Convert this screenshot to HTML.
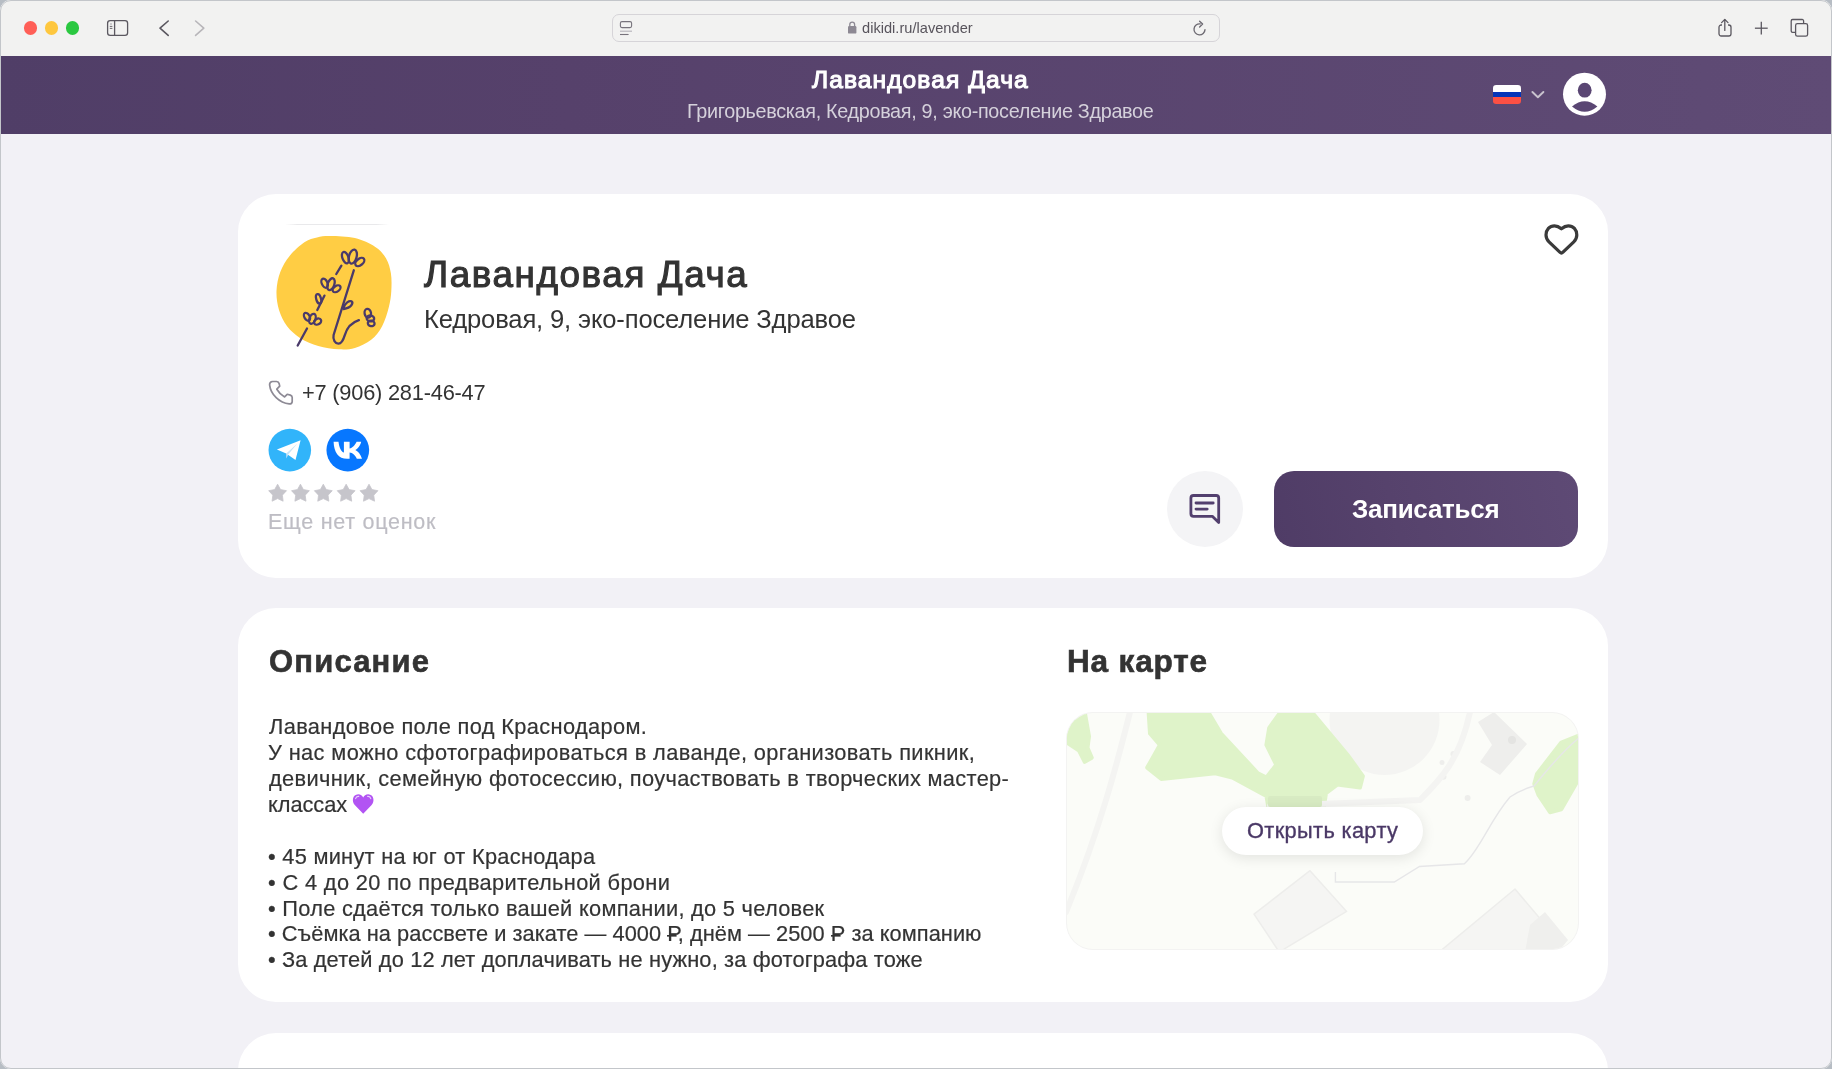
<!DOCTYPE html>
<html><head><meta charset="utf-8">
<style>
*{box-sizing:border-box;margin:0;padding:0}
html,body{width:1832px;height:1069px;overflow:hidden;background:#b7bdc4}
body{position:relative;font-family:"Liberation Sans",sans-serif}
.abs{position:absolute}
svg{position:absolute;overflow:visible}
#win{position:absolute;left:0;top:0;width:1832px;height:1069px;border-radius:11px;overflow:hidden;background:#f2f1f6}
#frame{position:absolute;left:0;top:0;width:1832px;height:1069px;border-radius:11px;border:1px solid #c3c6ca;pointer-events:none}
#chrome{position:absolute;left:0;top:0;width:1832px;height:56px;background:#f2f2f1}
#sep{display:none}
#hdr{position:absolute;left:0;top:56px;width:1832px;height:78px;background:linear-gradient(90deg,#503e67 0%,#56416b 31%,#5e4a74 93%,#5f4b75 100%)}
.t{position:absolute;white-space:nowrap;line-height:40px;will-change:transform}
.card{position:absolute;left:238px;width:1370px;background:#fff;border-radius:38px}
.rub{background:linear-gradient(#333,#333) no-repeat;background-size:0.48em 0.075em;background-position:-0.04em 0.665em}
</style></head><body>
<div id="win">
  <div id="chrome"></div>
  <!-- traffic lights -->
  <div class="abs" style="left:23.8px;top:21.2px;width:13.5px;height:13.5px;border-radius:50%;background:#ff5f57"></div>
  <div class="abs" style="left:44.8px;top:21.2px;width:13.5px;height:13.5px;border-radius:50%;background:#fec73e"></div>
  <div class="abs" style="left:65.6px;top:21.2px;width:13.5px;height:13.5px;border-radius:50%;background:#2ac840"></div>
  <!-- sidebar icon -->
  <svg style="left:0;top:0" width="1" height="1">
    <rect x="107.6" y="20.6" width="20" height="14.8" rx="2.6" fill="none" stroke="#5b5860" stroke-width="1.3"/>
    <line x1="114.6" y1="20.6" x2="114.6" y2="35.4" stroke="#5b5860" stroke-width="1.3"/>
    <line x1="110.2" y1="24" x2="111.8" y2="24" stroke="#8a878e" stroke-width="0.9"/>
    <line x1="109.8" y1="26.4" x2="112.4" y2="26.4" stroke="#5b5860" stroke-width="0.9"/>
    <line x1="109.8" y1="28.4" x2="112.4" y2="28.4" stroke="#5b5860" stroke-width="0.9"/>
    <!-- back / forward -->
    <polyline points="168.2,21 160,28.2 168.2,35.4" fill="none" stroke="#5b5860" stroke-width="1.6" stroke-linecap="round" stroke-linejoin="round"/>
    <polyline points="195.6,21 203.8,28.2 195.6,35.4" fill="none" stroke="#b8b6ba" stroke-width="1.6" stroke-linecap="round" stroke-linejoin="round"/>
  </svg>
  <!-- url bar -->
  <div class="abs" style="left:612px;top:14px;width:607.5px;height:27.5px;border:1px solid #d6d4d8;border-radius:7px"></div>
  <svg style="left:0;top:0" width="1" height="1">
    <rect x="620.4" y="21.6" width="11.2" height="6" rx="1.6" fill="none" stroke="#77737c" stroke-width="1.1"/>
    <line x1="620" y1="31.2" x2="632" y2="31.2" stroke="#b5b2b8" stroke-width="1.1"/>
    <line x1="620" y1="34.5" x2="628.6" y2="34.5" stroke="#77737c" stroke-width="1.1"/>
    <!-- lock -->
    <path d="M849.8,26.2 v-1.6 a2.4,2.4 0 0 1 4.8,0 v1.6" fill="none" stroke="#8d8993" stroke-width="1.3"/>
    <rect x="848" y="26" width="8.4" height="7.6" rx="1.2" fill="#8d8993"/>
    <!-- reload -->
    <path d="M1205,29.6 A5.5,5.5 0 1 1 1200.2,23.9" fill="none" stroke="#6d6a72" stroke-width="1.35" stroke-linecap="round"/>
    <polyline points="1199.6,21.2 1202.6,24.1 1199.6,27" fill="none" stroke="#6d6a72" stroke-width="1.35" stroke-linecap="round" stroke-linejoin="round"/>
    <!-- share -->
    <path d="M1722,25 h-0.8 a2.2,2.2 0 0 0 -2.2,2.2 v6.6 a2.2,2.2 0 0 0 2.2,2.2 h7.6 a2.2,2.2 0 0 0 2.2,-2.2 v-6.6 a2.2,2.2 0 0 0 -2.2,-2.2 h-0.8" fill="none" stroke="#5b5860" stroke-width="1.3"/>
    <line x1="1724.8" y1="19.8" x2="1724.8" y2="30.4" stroke="#5b5860" stroke-width="1.3" stroke-linecap="round"/>
    <polyline points="1721.6,22.6 1724.8,19.4 1728,22.6" fill="none" stroke="#5b5860" stroke-width="1.3" stroke-linejoin="round" stroke-linecap="round"/>
    <!-- plus -->
    <line x1="1761.3" y1="21.8" x2="1761.3" y2="34.6" stroke="#5b5860" stroke-width="1.3"/>
    <line x1="1754.9" y1="28.2" x2="1767.7" y2="28.2" stroke="#5b5860" stroke-width="1.3"/>
    <!-- tabs -->
    <path d="M1795,32.3 h-2.4 a1.4,1.4 0 0 1 -1.4,-1.4 v-10 a1.4,1.4 0 0 1 1.4,-1.4 h9.6 a1.4,1.4 0 0 1 1.4,1.4 v2.4" fill="none" stroke="#5b5860" stroke-width="1.3"/>
    <rect x="1795.6" y="23.6" width="12" height="12.6" rx="1.8" fill="none" stroke="#5b5860" stroke-width="1.3"/>
  </svg>
  <div id="sep"></div>
  <div id="hdr"></div>
  <!-- flag -->
  <div class="abs" style="left:1493.2px;top:84.8px;width:27.9px;height:19px;border-radius:3.2px;overflow:hidden;background:linear-gradient(180deg,#ffffff 0 34.5%,#0535b8 34.5% 63.5%,#fc5044 63.5% 100%)"></div>
  <svg style="left:0;top:0" width="1" height="1">
    <polyline points="1532.4,92 1537.9,97.3 1543.4,92" fill="none" stroke="#c9c3ce" stroke-width="1.9" stroke-linecap="round" stroke-linejoin="round"/>
    <circle cx="1584.5" cy="94.2" r="21.5" fill="#ffffff"/>
    <ellipse cx="1584.7" cy="90.2" rx="6.9" ry="7.4" fill="#5a4673"/>
    <path d="M1572,106.5 Q1584.7,96 1597.4,106.5 Q1584.7,117 1572,106.5 Z" fill="#5a4673"/>
  </svg>

  <div class="card" style="top:193.5px;height:384.4px"></div>
  <div class="card" style="top:608.3px;height:394px"></div>
  <div class="card" style="top:1032.7px;height:200px"></div>

  <!-- logo -->
  <div class="abs" style="left:285px;top:224.4px;width:104px;height:1px;background:linear-gradient(90deg,rgba(225,225,228,0),#e9e9eb 12%,#e9e9eb 88%,rgba(225,225,228,0))"></div>
  <svg style="left:0;top:0" width="1" height="1">
    <path d="M330.5,236.0 C336.8,236.1 347.4,236.3 354.9,238.1 C362.4,239.9 370.1,243.5 375.3,246.9 C380.5,250.3 383.5,254.0 386.1,258.4 C388.7,262.8 390.0,267.9 390.9,273.3 C391.8,278.7 391.6,285.4 391.3,291.0 C391.0,296.6 390.3,301.3 388.8,307.2 C387.3,313.1 385.0,320.8 382.1,326.2 C379.2,331.6 375.7,336.2 371.2,339.8 C366.7,343.4 360.3,346.3 354.9,347.9 C349.5,349.5 344.8,349.6 338.7,349.3 C332.6,349.0 324.6,347.7 318.3,345.9 C312.0,344.1 305.9,341.7 300.7,338.4 C295.5,335.1 290.7,330.9 287.1,326.2 C283.5,321.5 280.8,315.9 279.0,310.0 C277.2,304.1 276.3,297.3 276.5,291.0 C276.7,284.7 278.1,277.9 280.3,272.0 C282.5,266.1 285.7,260.7 289.8,255.7 C293.9,250.7 300.3,245.1 304.8,242.1 C309.3,239.1 312.7,238.4 317.0,237.4 C321.3,236.4 324.2,235.9 330.5,236.0 Z" fill="#ffcd44"/>
<g fill="none" stroke="#4a3a6a" stroke-width="2.3" stroke-linecap="round" stroke-linejoin="round">
<path d="M353.8,270.3 L333.6,335 C332.6,339.8 335.2,343.8 338.6,343.6 C341.8,343.4 343.4,339.6 344.6,335.6 C346.6,328.6 350.6,322.8 358.9,320.2"/>
<path d="M343.6,307.6 C345.2,302.6 349,300.6 351.6,301.4 C353.4,302.8 351.8,307.6 343.6,309"/>
<line x1="341.4" y1="265.7" x2="336.3" y2="274"/>
<line x1="324.5" y1="295.6" x2="317.3" y2="310"/>
<line x1="307" y1="328.5" x2="297.7" y2="345.5"/>
<ellipse cx="345.4" cy="257.6" rx="3.0" ry="6.0" transform="rotate(-20 345.4 257.6)"/><ellipse cx="352.8" cy="256.6" rx="3.8" ry="7.2" transform="rotate(15 352.8 256.6)"/><ellipse cx="359.8" cy="262" rx="3.2" ry="5.2" transform="rotate(52 359.8 262)"/>
<ellipse cx="324.6" cy="283.2" rx="2.8" ry="4.8" transform="rotate(-25 324.6 283.2)"/><ellipse cx="331" cy="284.2" rx="3.3" ry="6.2" transform="rotate(20 331 284.2)"/><ellipse cx="336.6" cy="288.8" rx="2.8" ry="4.4" transform="rotate(55 336.6 288.8)"/>
<ellipse cx="318.6" cy="298.8" rx="2.4" ry="4.8" transform="rotate(-15 318.6 298.8)"/>
<ellipse cx="307" cy="316.8" rx="2.6" ry="4.3" transform="rotate(-30 307 316.8)"/><ellipse cx="312.4" cy="318.8" rx="3.0" ry="5.2" transform="rotate(20 312.4 318.8)"/><ellipse cx="317.6" cy="321.6" rx="2.8" ry="3.8" transform="rotate(60 317.6 321.6)"/>
<ellipse cx="367.8" cy="313.2" rx="3.2" ry="4.4" transform="rotate(-10 367.8 313.2)"/><ellipse cx="370.4" cy="318.4" rx="3.8" ry="2.9" transform="rotate(10 370.4 318.4)"/><ellipse cx="371.2" cy="323.4" rx="3.4" ry="2.7" transform="rotate(10 371.2 323.4)"/>
</g>
  </svg>
  <!-- heart -->
  <svg style="left:0;top:0" width="1" height="1">
    <path d="M1561.4,228.8 C1558.8,226.6 1556.6,225.8 1554.5,225.8 C1549.5,225.8 1546,229.8 1546,235 C1546,238 1547.4,240.2 1549,241.8 L1559.8,252.2 C1560.8,253.2 1562,253.2 1563,252.2 L1573.8,241.8 C1575.4,240.2 1576.8,238 1576.8,235 C1576.8,229.8 1573.3,225.8 1568.3,225.8 C1566.2,225.8 1564,226.6 1561.4,228.8 Z" fill="none" stroke="#3a3a3a" stroke-width="3.2" stroke-linejoin="round"/>
  </svg>
  <!-- phone icon -->
  <svg style="left:0;top:0" width="1" height="1">
    <path d="M272.6,381.5 L276.6,381.5 C278.4,381.6 278.9,382.6 279.2,383.8 L279.7,386.2 L276.8,389.2 C278.8,392.6 281.4,395.2 284.6,396.9 L287.2,394.3 L290.4,395.1 C291.6,395.5 292.2,396.2 292.2,397.6 L292.2,401.6 C292.1,403.2 291,404 289.2,403.9 C279.6,403 270.6,394.4 269.6,384.8 C269.5,382.6 270.6,381.6 272.6,381.5 Z" fill="none" stroke="#8d8a95" stroke-width="1.7" stroke-linejoin="round"/>
  </svg>
  <!-- telegram / vk -->
  <svg style="left:0;top:0" width="1" height="1">
    <circle cx="289.8" cy="450.1" r="21.3" fill="#31b4fa"/>
    <path d="M300.6,440.2 L276.9,449.5 L286.2,453.4 L295.5,460 Z" fill="#ffffff"/>
    <path d="M286.2,453.4 L297.4,443.4 L288.2,454.6 L286.4,458.6 Z" fill="#c8e4f6"/>
    <circle cx="347.8" cy="450.1" r="21.35" fill="#0777ff"/>
    <path d="M333.6,441.7 H338.5 C339.2,448 341.5,451.8 343.9,452.6 V441.7 H349.6 V448.4 C352.2,448.1 355.2,444.9 356.6,441.7 H361.2 C360.6,445.2 357.8,448.6 355.3,450 C357.8,451.2 360.7,454.2 362,458.8 H356.8 C355.6,455.6 352.6,452.8 349.6,452.6 V458.8 H347.2 C338.4,458.8 333.9,452.2 333.6,441.7 Z" fill="#ffffff"/>
  </svg>
  <!-- stars -->
  <svg style="left:0;top:0" width="1" height="1">
    <g fill="#c6c5cb" stroke="#c6c5cb" stroke-width="0.8" stroke-linejoin="round"><path d="M277.60,484.20 L280.54,489.55 L286.54,490.70 L282.36,495.15 L283.13,501.20 L277.60,498.60 L272.07,501.20 L272.84,495.15 L268.66,490.70 L274.66,489.55 Z"/><path d="M300.45,484.20 L303.39,489.55 L309.39,490.70 L305.21,495.15 L305.98,501.20 L300.45,498.60 L294.92,501.20 L295.69,495.15 L291.51,490.70 L297.51,489.55 Z"/><path d="M323.30,484.20 L326.24,489.55 L332.24,490.70 L328.06,495.15 L328.83,501.20 L323.30,498.60 L317.77,501.20 L318.54,495.15 L314.36,490.70 L320.36,489.55 Z"/><path d="M346.15,484.20 L349.09,489.55 L355.09,490.70 L350.91,495.15 L351.68,501.20 L346.15,498.60 L340.62,501.20 L341.39,495.15 L337.21,490.70 L343.21,489.55 Z"/><path d="M369.00,484.20 L371.94,489.55 L377.94,490.70 L373.76,495.15 L374.53,501.20 L369.00,498.60 L363.47,501.20 L364.24,495.15 L360.06,490.70 L366.06,489.55 Z"/></g>
  </svg>
  <!-- comment button -->
  <div class="abs" style="left:1167px;top:471px;width:76px;height:76px;border-radius:50%;background:#f4f4f6"></div>
  <svg style="left:0;top:0" width="1" height="1">
    <path d="M1193.5,495.5 H1216.2 C1217.8,495.5 1218.7,496.4 1218.7,498 V522.6 L1212.3,516.3 H1193.5 C1191.9,516.3 1190.9,515.4 1190.9,513.8 V498 C1190.9,496.4 1191.9,495.5 1193.5,495.5 Z" fill="none" stroke="#523f6e" stroke-width="2.8" stroke-linejoin="round"/>
    <line x1="1196" y1="503" x2="1213.2" y2="503" stroke="#523f6e" stroke-width="2.8" stroke-linecap="round"/>
    <line x1="1196" y1="509.1" x2="1207.2" y2="509.1" stroke="#523f6e" stroke-width="2.8" stroke-linecap="round"/>
  </svg>
  <!-- book button -->
  <div class="abs" style="left:1274px;top:471.3px;width:304px;height:76px;border-radius:20px;background:linear-gradient(75deg,#4f3c66 0%,#56426c 40%,#5e4a75 100%)"></div>

  <!-- map -->
  <div class="abs" style="left:1067px;top:713px;width:511px;height:236px;border-radius:26px;overflow:hidden;background:#fbfcf8;box-shadow:0 0 0 1px #f3f3f2">
    <svg style="left:-1067px;top:-713px" width="1" height="1">
<circle cx="1384.5" cy="720" r="55" fill="#f4f4f2"/>
<g fill="#dff3c9" stroke="#dff3c9" stroke-width="4" stroke-linejoin="round">
<path d="M1066,737 L1076.2,712 L1084.7,712 L1089,736.4 L1087.5,747.7 L1091.8,757.7 L1084.7,761.9 L1079,750.6 L1066,742 Z"/>
<path d="M1148.6,712 L1208.2,712 L1221,733.5 L1257.9,773.3 L1266.4,777.5 L1276.3,764.8 L1266.4,744.9 L1269.2,727.9 L1280.6,712 L1311.8,712 L1348.7,756.3 L1362.9,776.1 L1360,787.5 L1337.3,784.6 L1326,793.2 L1323.1,812 L1269.2,812 L1266.4,796 L1232.3,777.5 L1215.3,773.3 L1161.3,779 L1147.2,767.6 L1159.9,744.9 L1150,733.5 Z"/>
<path d="M1537,773.9 L1561.3,742.6 L1580,735 L1580,776.7 L1561.3,809.3 L1550,812.2 L1538.6,795.2 L1534.3,783.8 Z"/>
</g>
<g fill="#f5f5f3" stroke="#ededeb" stroke-width="1.5" stroke-linejoin="round">
<path d="M1310,870.7 L1346.6,911.4 L1279.2,952 L1254,914.2 Z"/>
<path d="M1515,889 L1559.8,942 L1550,952 L1439.2,952 Z"/>
</g>
<g fill="#eeeeec">
<path d="M1478,722 L1494,712 L1527,744 L1500,775 L1480,762 L1492,745 Z"/><circle cx="1512" cy="740" r="4" fill="#e4e4e2"/>
<circle cx="1453.4" cy="754" r="3"/><circle cx="1442" cy="762.5" r="2.5"/><circle cx="1443.5" cy="776.7" r="3"/><circle cx="1467.6" cy="798" r="3"/>
<path d="M1530,925 L1545,912 L1568,940 L1558,952 L1525,952 Z" fill="#efefed"/>
</g>
<g fill="none" stroke="#f2f2f0" stroke-width="6" stroke-linecap="round" stroke-linejoin="round">
<path d="M1130,712 C1118,760 1100,830 1066,912" stroke="#f4f4f2"/>
<path d="M1270,806 L1420,800 C1440,780 1460,760 1470,712" stroke="#f4f4f2"/>
</g>
<path d="M1335.4,872 L1335.4,882 L1394.3,882 L1419.5,866.5 L1464.4,863.7 C1480,850 1490,820 1510,797 C1520,790 1528,788 1534,786 C1555,760 1570,745 1580,737" fill="none" stroke="#e6e6e8" stroke-width="1.4"/>
<rect x="1268" y="796" width="54" height="11" rx="2" fill="#d8ebc3"/>
    </svg>
  </div>
  <div class="abs" style="left:1222px;top:807px;width:201px;height:48px;border-radius:24px;background:#fff;box-shadow:0 3px 14px rgba(0,0,0,0.10)"></div>
  <!-- heart emoji -->
  <svg style="left:0;top:0" width="1" height="1">
    <path d="M363.2,813.8 L355,805.2 C351.4,801.6 352.4,794.4 358.2,794.2 C360.6,794.2 362.4,795.8 363.2,797.4 C364,795.8 365.8,794.2 368.2,794.2 C374,794.4 375,801.6 371.4,805.2 Z" fill="#b254f3"/>
    <path d="M355.6,798.6 C356,797 357.4,796.2 358.8,796.4" fill="none" stroke="#e9d2fb" stroke-width="1.1" stroke-linecap="round"/>
    <path d="M367.6,796.4 C369,796.2 370.4,797 370.8,798.6" fill="none" stroke="#e9d2fb" stroke-width="1.1" stroke-linecap="round"/>
  </svg>
<div class="t" style="left:861.90px;top:7.94px;font-size:14.6px;font-weight:400;color:#57535b;letter-spacing:0.018px;">dikidi.ru/lavender</div>
<div class="t" style="left:812.10px;top:60.08px;font-size:24.6px;font-weight:400;color:#ffffff;letter-spacing:1.064px;-webkit-text-stroke:1.1px #ffffff;">Лавандовая Дача</div>
<div class="t" style="left:686.70px;top:90.79px;font-size:19.8px;font-weight:400;color:#d5d1db;letter-spacing:-0.310px;">Григорьевская, Кедровая, 9, эко-поселение Здравое</div>
<div class="t" style="left:423.80px;top:254.75px;font-size:36.8px;font-weight:400;color:#333333;letter-spacing:1.593px;-webkit-text-stroke:1.1px #333333;">Лавандовая Дача</div>
<div class="t" style="left:423.90px;top:298.73px;font-size:25.6px;font-weight:400;color:#333333;letter-spacing:-0.158px;">Кедровая, 9, эко-поселение Здравое</div>
<div class="t" style="left:301.90px;top:373.05px;font-size:21.8px;font-weight:400;color:#333333;letter-spacing:-0.212px;">+7 (906) 281-46-47</div>
<div class="t" style="left:268.20px;top:502.35px;font-size:21.5px;font-weight:400;color:#bebdc4;letter-spacing:0.731px;-webkit-text-stroke:0.2px #bebdc4;">Еще нет оценок</div>
<div class="t" style="left:1351.70px;top:489.29px;font-size:26.0px;font-weight:700;color:#ffffff;letter-spacing:-0.267px;">Записаться</div>
<div class="t" style="left:268.90px;top:642.26px;font-size:31.0px;font-weight:700;color:#333333;letter-spacing:1.171px;-webkit-text-stroke:0.6px #333333;">Описание</div>
<div class="t" style="left:1066.70px;top:641.15px;font-size:31.6px;font-weight:700;color:#333333;letter-spacing:0.800px;-webkit-text-stroke:0.6px #333333;">На карте</div>
<div class="t" style="left:1246.70px;top:811.35px;font-size:21.8px;font-weight:400;color:#4a3866;letter-spacing:0.358px;-webkit-text-stroke:0.35px #4a3866;">Открыть карту</div>
<div class="t" style="left:268.70px;top:707.45px;font-size:21.8px;font-weight:400;color:#333333;letter-spacing:0.365px;-webkit-text-stroke:0.2px #333333;">Лавандовое поле под Краснодаром.</div>
<div class="t" style="left:267.70px;top:733.33px;font-size:21.8px;font-weight:400;color:#333333;letter-spacing:0.387px;-webkit-text-stroke:0.2px #333333;">У нас можно сфотографироваться в лаванде, организовать пикник,</div>
<div class="t" style="left:268.70px;top:759.21px;font-size:21.8px;font-weight:400;color:#333333;letter-spacing:0.339px;-webkit-text-stroke:0.2px #333333;">девичник, семейную фотосессию, поучаствовать в творческих мастер-</div>
<div class="t" style="left:267.70px;top:785.09px;font-size:21.8px;font-weight:400;color:#333333;letter-spacing:-0.050px;-webkit-text-stroke:0.2px #333333;">классах</div>
<div class="t" style="left:268.10px;top:836.85px;font-size:21.8px;font-weight:400;color:#333333;letter-spacing:0.279px;-webkit-text-stroke:0.2px #333333;">• 45 минут на юг от Краснодара</div>
<div class="t" style="left:268.10px;top:862.73px;font-size:21.8px;font-weight:400;color:#333333;letter-spacing:0.357px;-webkit-text-stroke:0.2px #333333;">• С 4 до 20 по предварительной брони</div>
<div class="t" style="left:268.10px;top:888.61px;font-size:21.8px;font-weight:400;color:#333333;letter-spacing:0.284px;-webkit-text-stroke:0.2px #333333;">• Поле сдаётся только вашей компании, до 5 человек</div>
<div class="t" style="left:268.10px;top:914.49px;font-size:21.8px;font-weight:400;color:#333333;letter-spacing:0.045px;-webkit-text-stroke:0.2px #333333;">• Съёмка на рассвете и закате — 4000 <span class="rub">Р</span>, днём — 2500 <span class="rub">Р</span> за компанию</div>
<div class="t" style="left:268.10px;top:940.37px;font-size:21.8px;font-weight:400;color:#333333;letter-spacing:0.146px;-webkit-text-stroke:0.2px #333333;">• За детей до 12 лет доплачивать не нужно, за фотографа тоже</div>
</div>
<div id="frame"></div>
</body></html>
